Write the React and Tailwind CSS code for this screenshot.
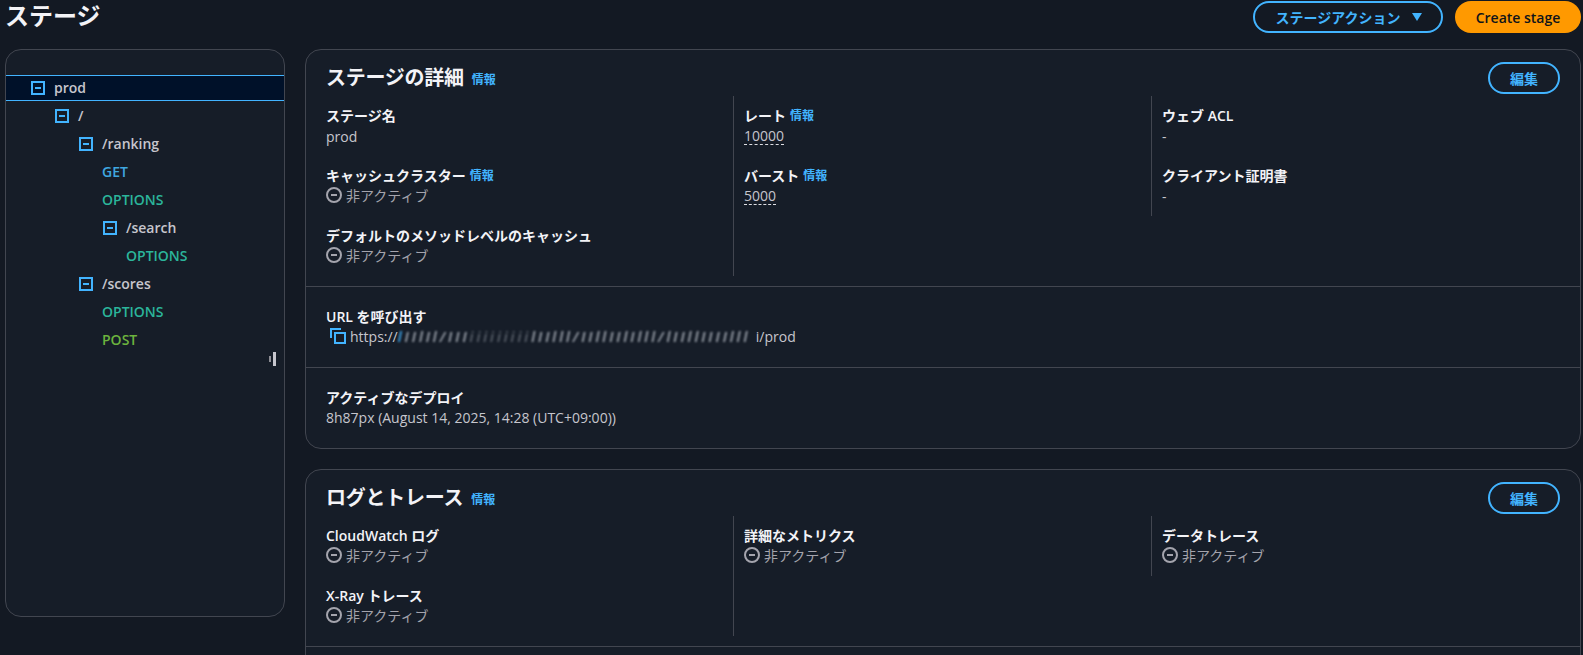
import React from "react";

function MinusBox() {
  return (
    <span className="w-[14px] h-[14px] border-2 border-[#42b4ff] flex items-center justify-center shrink-0">
      <span className="w-[6px] h-[2px] bg-[#42b4ff]" />
    </span>
  );
}

function TreeRow({ icon, label, left, color, selected }) {
  return (
    <div className={selected ? "h-[28px] py-px" : "h-[28px]"}>
      <div
        className={
          "h-full flex items-center gap-[9px] font-semibold text-[14px] " +
          (selected ? "bg-[#001129] border-y border-[#42b4ff]" : "")
        }
      >
        {left}
        {icon && <MinusBox />}
        <span className={"-mt-px " + (color || "text-[#c6c6cd]")}>{label}</span>
      </div>
    </div>
  );
}

function Info({ className }) {
  return <span className={"text-[12px] font-bold text-[#42b4ff] " + (className || "")}>情報</span>;
}

function Inactive() {
  return (
    <div className="-mt-px mb-px flex items-center gap-[4px] h-[20px] text-[#a4a4ad]">
      <svg width="16" height="16" viewBox="0 0 16 16" fill="none" stroke="#a4a4ad" strokeWidth="2">
        <circle cx="8" cy="8" r="7" />
        <path d="M5 8h6" />
      </svg>
      <span>非アクティブ</span>
    </div>
  );
}

function Item({ label, info, children }) {
  return (
    <div className="py-[10px]">
      <div className="h-[20px] leading-[20px] font-semibold text-[#f3f3f7] flex items-center gap-[4px]">
        {label}
        {info && <Info />}
      </div>
      {children}
    </div>
  );
}

function Value({ children }) {
  return <div className="h-[20px] pt-px leading-[20px] text-[#c6c6cd]">{children}</div>;
}

function Dashed({ children }) {
  return (
    <div className="h-[20px]">
      <span className="block w-fit pt-px leading-[17px] border-b border-dashed border-[#dedee3] text-[#c6c6cd]">
        {children}
      </span>
    </div>
  );
}

function CardHeader({ title }) {
  return (
    <div className="h-[46px] pl-[20px] pr-[20px] flex items-start justify-between">
      <div className="flex items-center gap-[8px] h-[36px] mt-[10px]">
        <span className="text-[20px] font-bold tracking-[-0.25px] text-[#f3f3f7]">{title}</span>
        <Info className="mt-[3px]" />
      </div>
      <button className="mt-[12px] w-[72px] h-[32px] rounded-full border-2 border-[#42b4ff] text-[#42b4ff] font-bold text-[14px]">
        編集
      </button>
    </div>
  );
}

function Columns({ first, second, third, className }) {
  return (
    <div className={"flex items-start pl-[20px] " + (className || "")}>
      <div className="w-[407px] shrink-0">{first}</div>
      <div className="w-[418px] shrink-0 pl-[10px] border-l border-[#424650]">{second}</div>
      <div className="flex-1 pl-[10px] border-l border-[#424650]">{third}</div>
    </div>
  );
}

export default function App() {
  return (
    <div className="h-[655px] overflow-hidden bg-[#131923] pl-[5px] pr-[2px] text-[14px] font-['Open_Sans','Noto_Sans_CJK_JP',sans-serif]">
      <div className="h-[49px] flex items-start justify-between">
        <h1 className="text-[24px] font-bold text-[#f3f3f7] leading-[32px]">ステージ</h1>
        <div className="flex gap-[12px] pt-px">
          <button className="w-[190px] h-[32px] pl-[2px] rounded-full border-2 border-[#42b4ff] text-[#42b4ff] font-bold flex items-center justify-center gap-[10px]">
            ステージアクション
            <svg width="12" height="10" viewBox="0 0 12 10" fill="#42b4ff">
              <path d="M1 1h10L6 9z" />
            </svg>
          </button>
          <button className="w-[126px] h-[32px] rounded-full bg-[#ff9900] text-[#0f141a] font-semibold">
            Create stage
          </button>
        </div>
      </div>

      <div className="flex gap-[20px] items-start">
        <div className="relative w-[280px] h-[568px] shrink-0 rounded-[16px] border border-[#424650] bg-[#161d28] pt-[24px] overflow-hidden">
          <TreeRow selected icon label="prod" left={<span className="w-[16px]" />} />
          <TreeRow icon label="/" left={<span className="w-[40px]" />} />
          <TreeRow icon label="/ranking" left={<span className="w-[64px]" />} />
          <TreeRow label="GET" color="text-[#3fa7e0]" left={<span className="w-[87px]" />} />
          <TreeRow label="OPTIONS" color="text-[#2bb59b]" left={<span className="w-[87px]" />} />
          <TreeRow icon label="/search" left={<span className="w-[88px]" />} />
          <TreeRow label="OPTIONS" color="text-[#2bb59b]" left={<span className="w-[111px]" />} />
          <TreeRow icon label="/scores" left={<span className="w-[64px]" />} />
          <TreeRow label="OPTIONS" color="text-[#2bb59b]" left={<span className="w-[87px]" />} />
          <TreeRow label="POST" color="text-[#6cb33e]" left={<span className="w-[87px]" />} />
          <div className="absolute left-[263px] top-[302px] flex items-center gap-[2px]">
            <span className="w-[2px] h-[6px] bg-[#8d8d94]" />
            <span className="w-[3px] h-[14px] bg-[#c6c6cd]" />
          </div>
        </div>

        <div className="flex-1 min-w-0 flex flex-col gap-[20px]">
          <div className="rounded-[16px] border border-[#424650] bg-[#161d28]">
            <CardHeader title="ステージの詳細" />
            <Columns
              first={
                <>
                  <Item label="ステージ名">
                    <Value>prod</Value>
                  </Item>
                  <Item label="キャッシュクラスター" info>
                    <Inactive />
                  </Item>
                  <Item label="デフォルトのメソッドレベルのキャッシュ">
                    <Inactive />
                  </Item>
                </>
              }
              second={
                <>
                  <Item label="レート" info>
                    <Dashed>10000</Dashed>
                  </Item>
                  <Item label="バースト" info>
                    <Dashed>5000</Dashed>
                  </Item>
                  <div className="h-[60px]" />
                </>
              }
              third={
                <>
                  <Item label="ウェブ ACL">
                    <Value>-</Value>
                  </Item>
                  <Item label="クライアント証明書">
                    <Value>-</Value>
                  </Item>
                </>
              }
            />
            <div className="mt-[10px] border-t border-[#424650] px-[20px] pt-[20px] pb-[21px]">
              <div className="h-[20px] leading-[20px] font-semibold text-[#f3f3f7]">URL を呼び出す</div>
              <div className="-mt-px h-[20px] flex items-center text-[#c6c6cd]">
                <svg width="16" height="16" viewBox="0 0 16 16" fill="none" stroke="#42b4ff" strokeWidth="2" className="ml-[4px] mr-[4px]">
                  <path d="M1 10V1h10" />
                  <rect x="5" y="5" width="10" height="10" />
                </svg>
                <span>https://</span>
                {/* the address is smeared out in the screenshot */}
                <span className="w-[358px] whitespace-nowrap blur-[1px] italic font-semibold text-[#a9afb8] tracking-[3px]">
                  <span className="text-[#42b4ff]">l</span>
                  <span>IIlIl/III</span>
                  <span className="text-[#5f6670]">iiiiiiiii</span>
                  <span>lIIlll/IIllIIlIlll/lIIllIIIIlll</span>
                </span>
                <span>i/prod</span>
              </div>
            </div>
            <div className="border-t border-[#424650] px-[20px] pt-[20px] pb-[20px]">
              <div className="h-[20px] leading-[20px] font-semibold text-[#f3f3f7]">アクティブなデプロイ</div>
              <div className="h-[20px] leading-[20px] text-[#c6c6cd]">8h87px (August 14, 2025, 14:28 (UTC+09:00))</div>
            </div>
          </div>

          <div className="rounded-[16px] border border-[#424650] bg-[#161d28] pb-[20px]">
            <CardHeader title="ログとトレース" />
            <Columns
              first={
                <>
                  <Item label="CloudWatch ログ">
                    <Inactive />
                  </Item>
                  <Item label="X-Ray トレース">
                    <Inactive />
                  </Item>
                </>
              }
              second={
                <Item label="詳細なメトリクス">
                  <Inactive />
                  <div className="h-[60px]" />
                </Item>
              }
              third={
                <Item label="データトレース">
                  <Inactive />
                </Item>
              }
            />
            <div className="mt-[10px] border-t border-[#424650] h-[40px]" />
          </div>
        </div>
      </div>
    </div>
  );
}
